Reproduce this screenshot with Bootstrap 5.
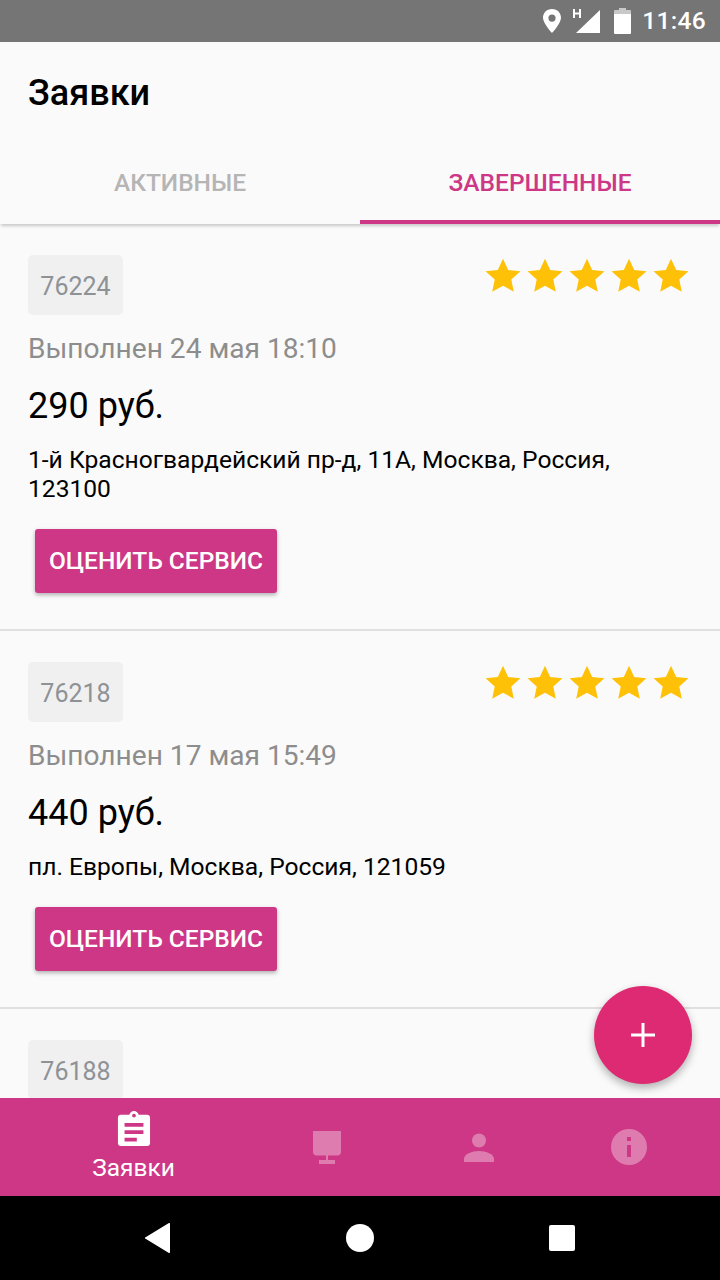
<!DOCTYPE html>
<html lang="ru">
<head>
  <meta charset="UTF-8">
  <meta name="viewport" content="width=device-width, initial-scale=1">
  <title>Заявки</title>
  <link href="https://cdn.jsdelivr.net/npm/bootstrap@5.3.3/dist/css/bootstrap.min.css" rel="stylesheet">
  <style>
    html, body { height: 1280px; overflow: hidden; }
    body { background: #fafafa; font-family: Roboto, "Liberation Sans", sans-serif; }
    .app-screen { width: 720px; height: 1280px; overflow: hidden; }
    .status-bar { height: 42px; background: #757575; color: #fff; padding-right: 14px; }
    .status-pin { margin-right: 8px; }
    .status-batt { margin-left: 13px; }
    .status-time { font-size: 24.5px; font-weight: 500; line-height: 42px; letter-spacing: .3px; margin-left: 11px; }
    .app-head { height: 100px; padding: 30px 28px 0; background: #fafafa; }
    .app-head h1 { font-size: 36px; font-weight: 500; line-height: 42px; margin: 0; color: #000; }
    .tab-bar { height: 82px; background: #fafafa; box-shadow: 0 3px 3px -1px rgba(0,0,0,.2); position: relative; }
    .tab-item { width: 360px; padding-top: 25px; text-align: center; font-size: 24.5px; font-weight: 500; line-height: 32px; color: #b5b5b5; }
    .tab-item.is-active { color: #cd3785; border-bottom: 4px solid #cd3785; }
    .order-list { flex: 1 1 0; overflow: hidden; min-height: 0; }
    .order-item { padding: 31px 28px 0; border-bottom: 2px solid #e0e0e0; }
    .order-num { width: 95px; height: 60px; background: #f0f0f0; border-radius: 5px; color: #8e9296; font-size: 25px; line-height: 63px; text-align: center; }
    .order-stars { margin-right: 3px; margin-top: 3px; gap: 6px; }
    .order-date { color: #8d8d8d; font-size: 28.1px; line-height: 32px; margin-top: 18px; }
    .order-price { color: #000; font-size: 36px; line-height: 44px; margin-top: 19px; }
    .order-addr { color: #000; font-size: 24.6px; line-height: 29px; margin-top: 17px; }
    .rate-btn { display: block; width: 242px; height: 64px; margin: 26px 0 36px 7px; padding: 0; background: #cd3785; color: #fff; border: 0; border-radius: 3px; font-size: 24.5px; font-weight: 500; box-shadow: 0 2px 4px rgba(0,0,0,.3); }
    .rate-btn:hover { background: #cd3785; color: #fff; }
    .add-btn { position: absolute; left: 594px; top: 986px; width: 98px; height: 98px; border-radius: 50%; background: #de2a72; border: 0; padding: 0; box-shadow: 0 4px 8px rgba(0,0,0,.3); }
    .bottom-nav { height: 98px; background: #cd3785; }
    .nav-cell { text-align: center; }
    .nav-cell svg { display: block; margin: 0 auto; }
    .nav-first { width: 267px; padding-top: 13px; color: #fff; font-size: 24.5px; line-height: 30px; }
    .nav-first div { margin-top: 7px; }
    .nav-desk { width: 120px; padding-top: 33px; }
    .nav-user { width: 183px; padding-top: 35px; }
    .nav-info { width: 118px; padding-top: 31px; }
    .android-nav { height: 84px; background: #000; }
    .android-back { margin-left: 145px; }
    .android-home, .android-recent { margin-left: 175px; }
  </style>
</head>
<body>
<div class="app-screen d-flex flex-column position-relative">

  <!-- статус-бар -->
  <div class="status-bar d-flex justify-content-end align-items-center flex-shrink-0">
    <svg class="status-pin" width="24" height="28" viewBox="0 0 24 28"><path fill="#fff" fill-rule="evenodd" d="M12 2C6.500 2 3 6 3 10.800 3 16.500 12 26 12 26s9-9.500 9-15.200C21 6 17.500 2 12 2zm0 5.500a3.600 3.600 0 1 1 0 7.200 3.600 3.600 0 0 1 0-7.200z"/></svg>
    <svg width="28" height="30" viewBox="0 0 28 30"><path fill="#fff" d="M4 27 28 4v23z"/><path fill="#fff" d="M1 3h2v3.500h4V3h2v9H7V8.500H3V12H1z"/></svg>
    <svg class="status-batt" width="18" height="26" viewBox="0 0 18 26"><path fill="#fff" fill-opacity=".6" d="M6 0h7v2h4a1 1 0 0 1 1 1v3H1V3a1 1 0 0 1 1-1h4z"/><path fill="#fff" d="M1 6h17v19a1 1 0 0 1-1 1H2a1 1 0 0 1-1-1z"/></svg>
    <span class="status-time">11:46</span>
  </div>

  <div class="app-head flex-shrink-0"><h1>Заявки</h1></div>

  <div class="tab-bar d-flex flex-shrink-0">
    <div class="tab-item">АКТИВНЫЕ</div>
    <div class="tab-item is-active">ЗАВЕРШЕННЫЕ</div>
  </div>

  <div class="order-list" id="orders"></div>

  <button class="add-btn d-flex align-items-center justify-content-center" type="button" aria-label="Добавить">
    <svg width="26" height="26" viewBox="0 0 26 26"><path fill="#fff" d="M11.500 1h3v10.500H25v3H14.500V25h-3V14.500H1v-3h10.500z"/></svg>
  </button>

  <div class="bottom-nav d-flex flex-shrink-0">
    <div class="nav-first text-center">
      <svg width="34" height="35" viewBox="0 0 36 38" class="d-block mx-auto" preserveAspectRatio="none"><path fill="#fff" fill-rule="evenodd" d="M4 4h9c.8-2.400 2.800-4 5-4s4.200 1.600 5 4h9c1.700 0 3 1.300 3 3v28c0 1.700-1.300 3-3 3H4c-1.700 0-3-1.300-3-3V7c0-1.700 1.300-3 3-3zm14-1a2 2 0 1 0 0 4 2 2 0 0 0 0-4zM8 13v4h20v-4zm0 8v4h20v-4zm0 8v4h13v-4z"/></svg>
      <div>Заявки</div>
    </div>
    <div class="nav-cell nav-desk">
      <svg width="30" height="34" viewBox="0 0 30 34"><path fill="#fff" fill-opacity=".35" d="M1 0h28v21c0 2-1.500 3.500-3.500 3.500h-21C2.500 24.500 1 23 1 21zM14 24.500h2V29h7v4H7v-4h7z"/></svg>
    </div>
    <div class="nav-cell nav-user">
      <svg width="30" height="30" viewBox="0 0 30 30"><circle cx="15" cy="7.500" r="7" fill="#fff" fill-opacity=".35"/><path fill="#fff" fill-opacity=".35" d="M0 29v-3c0-5 8-8 15-8s15 3 15 8v3z"/></svg>
    </div>
    <div class="nav-cell nav-info">
      <svg width="36" height="36" viewBox="0 0 36 36"><path fill="#fff" fill-opacity=".35" fill-rule="evenodd" d="M18 0a18 18 0 1 1 0 36 18 18 0 0 1 0-36zm-2 8v4h4V8zm0 8v12h4V16z"/></svg>
    </div>
  </div>

  <div class="android-nav d-flex align-items-center flex-shrink-0">
    <svg class="android-back" width="26" height="30" viewBox="0 0 26 30"><path fill="#fff" d="M25 1v28a1 1 0 0 1-1.500.8L1 16a1 1 0 0 1 0-2L23.500.2A1 1 0 0 1 25 1z"/></svg>
    <svg class="android-home" width="28" height="28" viewBox="0 0 28 28"><circle cx="14" cy="14" r="14" fill="#fff"/></svg>
    <svg class="android-recent" width="26" height="26" viewBox="0 0 26 26"><rect width="26" height="26" rx="2" fill="#fff"/></svg>
  </div>
</div>

<script>
  // третья заявка видна только верхним краем, ниже её закрывает нижнее меню
  const zayavki = [
    { num: "76224", date: "Выполнен 24 мая 18:10", price: "290 руб.", addr: "1-й Красногвардейский пр-д, 11А, Москва, Россия, 123100", stars: 5 },
    { num: "76218", date: "Выполнен 17 мая 15:49", price: "440 руб.", addr: "пл. Европы, Москва, Россия, 121059", stars: 5 },
    { num: "76188", stars: 0 }
  ];
  const star = `<svg width="36" height="34" viewBox="0 0 24 23"><path fill="#ffc107" d="M12 .5l3.500 7.600 8.300.9-6.200 5.600 1.700 8.200L12 18.700l-7.300 4.100 1.700-8.200L.2 9l8.300-.9z"/></svg>`;
  const spisok = document.getElementById("orders");
  zayavki.forEach(z => {
    const el = document.createElement("div");
    el.className = "order-item";
    let html = `
      <div class="d-flex justify-content-between align-items-start">
        <div class="order-num">${z.num}</div>
        <div class="order-stars d-flex">${star.repeat(z.stars)}</div>
      </div>`;
    if (z.date) {
      html += `
      <div class="order-date">${z.date}</div>
      <div class="order-price">${z.price}</div>
      <div class="order-addr">${z.addr}</div>
      <button class="btn rate-btn" type="button">ОЦЕНИТЬ СЕРВИС</button>`;
    }
    el.innerHTML = html;
    spisok.appendChild(el);
  });
</script>
<script src="https://cdn.jsdelivr.net/npm/bootstrap@5.3.3/dist/js/bootstrap.bundle.min.js"></script>
</body>
</html>
